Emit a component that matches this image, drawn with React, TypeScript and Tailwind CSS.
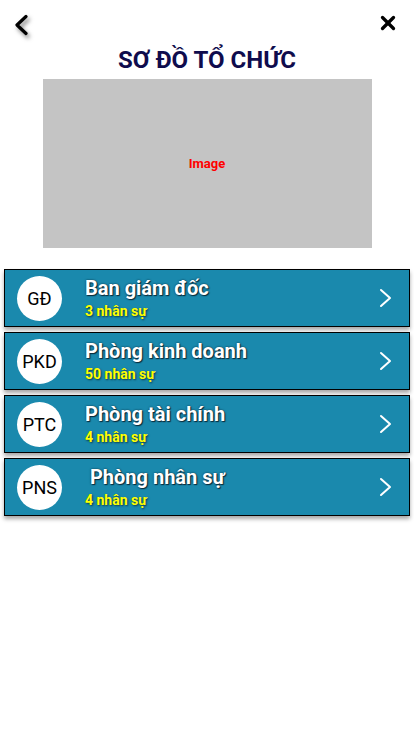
import { X } from "lucide-react";

const departments = [
  { code: "GĐ", name: "Ban giám đốc", count: 3 },
  { code: "PKD", name: "Phòng kinh doanh", count: 50 },
  { code: "PTC", name: "Phòng tài chính", count: 4 },
  { code: "PNS", name: " Phòng nhân sự", count: 4 },
];

export default function App() {
  return (
    <div className="w-[414px] h-[736px] bg-white font-['Roboto',sans-serif] overflow-hidden">
      <div className="flex items-start justify-between h-[46px] pl-[14px] pr-[15px] pt-[13px]">
        <svg
          width="16"
          height="22"
          viewBox="0 0 16 22"
          className="mt-[1px] drop-shadow-[2px_3px_2px_rgba(0,0,0,0.5)]"
        >
          <polyline
            points="12,2.5 3,11 12,19.5"
            fill="none"
            stroke="black"
            strokeWidth="3.2"
            strokeLinecap="round"
            strokeLinejoin="round"
          />
        </svg>
        <X size={22} strokeWidth={3.6} className="text-black -mt-[1px]" />
      </div>

      <h1 className="text-center text-[24px] leading-[28px] font-bold text-[#0f0c4d]">
        SƠ ĐỒ TỔ CHỨC
      </h1>

      <div className="mx-auto mt-[5px] w-[329px] h-[169px] bg-[#c4c4c4] flex items-center justify-center">
        <span className="text-[13px] font-bold text-[#ff0000] mt-[1px]">Image</span>
      </div>

      <div className="flex flex-col gap-[5px] px-[4px] mt-[21px]">
        {departments.map((d) => (
          <div
            key={d.code}
            className="h-[58px] bg-[#1a89ad] border border-black flex items-center pl-[12px] pr-[17px] shadow-[0_3px_4px_rgba(0,0,0,0.35)]"
          >
            <div className="w-[45px] h-[45px] rounded-full bg-white flex items-center justify-center shrink-0">
              <span className="text-[18px] text-black">{d.code}</span>
            </div>
            <div className="flex-1 pl-[23px] whitespace-pre">
              <div className="text-[20px] leading-[24px] font-bold text-white [text-shadow:0_0_2px_#0b2a3a,1px_1px_1px_#0b2a3a]">
                {d.name}
              </div>
              <div className="text-[14px] leading-[18px] mt-[2px] font-bold text-[#ffff00] [text-shadow:1px_1px_2px_rgba(0,0,0,0.6)]">
                {d.count} nhân sự
              </div>
            </div>
            <svg width="13" height="20" viewBox="0 0 13 20">
              <polyline
                points="2,2 11,10 2,18"
                fill="none"
                stroke="white"
                strokeWidth="2"
                strokeLinecap="round"
                strokeLinejoin="round"
              />
            </svg>
          </div>
        ))}
      </div>
    </div>
  );
}
